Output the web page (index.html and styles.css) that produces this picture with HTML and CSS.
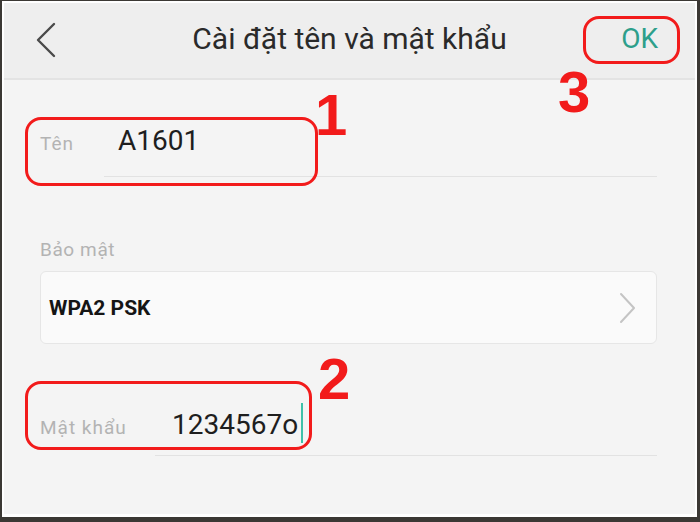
FILE: index.html
```html
<!DOCTYPE html>
<html>
<head>
    <meta charset="UTF-8">
    <title>Cài đặt tên và mật khẩu</title>
    <link rel="stylesheet" href="styles.css">
</head>
<body>
    <div class="frame">
        <div class="screen">
            <div class="header">
                <div class="header-side">
                    <svg class="back-icon" width="22" height="36" viewBox="0 0 22 36">
                        <polyline points="19,2 3,18 19,34" fill="none" stroke="#4a4a4a" stroke-width="2.4" stroke-linecap="round" stroke-linejoin="round"/>
                    </svg>
                </div>
                <div class="title">Cài đặt tên và mật khẩu</div>
                <div class="header-side header-right">
                    <span class="ok-button">OK</span>
                </div>
            </div>

            <div class="content">
                <div class="field-row name-row">
                    <div class="field-label">Tên</div>
                    <div class="field-input">A1601</div>
                </div>

                <div class="section-label">Bảo mật</div>
                <div class="select-card">
                    <span class="select-value">WPA2 PSK</span>
                    <svg class="arrow-icon" width="18" height="32" viewBox="0 0 18 32">
                        <polyline points="2,2 15,16 2,30" fill="none" stroke="#c4c4c4" stroke-width="2" stroke-linecap="round" stroke-linejoin="round"/>
                    </svg>
                </div>

                <div class="field-row password-row">
                    <div class="field-label">Mật khẩu</div>
                    <div class="field-input">1234567o<span class="cursor"></span></div>
                </div>
            </div>

            <!-- chú thích màu đỏ -->
            <div class="mark mark-ok"></div>
            <div class="mark mark-name"></div>
            <div class="mark mark-password"></div>
            <div class="step step-1">1</div>
            <div class="step step-2">2</div>
            <div class="step step-3">3</div>
        </div>
    </div>
</body>
</html>
```

FILE: styles.css
```css
:root {
    --ui-font: Roboto, "Noto Sans", "DejaVu Sans", sans-serif;
    --mark-red: #f21b1b;
}

* {
    margin: 0;
    padding: 0;
    box-sizing: border-box;
}

body {
    width: 700px;
    height: 522px;
    background: #3b3834;
    font-family: var(--ui-font);
    overflow: hidden;
}

.frame {
    width: 700px;
    height: 522px;
    border-style: solid;
    border-color: #3b3834;
    border-width: 1px 3px 5px 2px;
    padding: 2px 2px 3px 2px;
    background: #ffffff;
}

.screen {
    position: relative;
    height: 100%;
    background: #f4f4f4;
    color: #222;
}

/* thanh tiêu đề */
.header {
    display: flex;
    align-items: center;
    height: 77px;
    background: #eeeeee;
    border-bottom: 2px solid #e3e3e3;
}

.header-side {
    width: 110px;
    display: flex;
    align-items: center;
}

.back-icon {
    margin-left: 31px;
    margin-top: -2px;
}

.title {
    flex: 1;
    text-align: center;
    font-size: 30px;
    color: #2a2a2a;
    margin-top: -4px;
    white-space: nowrap;
}

.header-right {
    justify-content: flex-end;
    padding-right: 37px;
}

.ok-button {
    font-size: 28px;
    color: #2d9f8b;
    margin-top: -4px;
}

/* nội dung */
.content {
    padding: 0 38px 0 36px;
}

.field-row {
    display: flex;
    align-items: baseline;
}

.name-row {
    margin-top: 45px;
}

.password-row {
    margin-top: 59px;
}

.field-label {
    font-size: 19px;
    letter-spacing: 1px;
    color: #b3b3b3;
}

.name-row .field-label {
    width: 64px;
}

.password-row .field-label {
    width: 115px;
}

.field-input {
    flex: 1;
    font-size: 28px;
    line-height: 32px;
    color: #1e1e1e;
    border-bottom: 1px solid #e2e2e2;
}

.name-row .field-input {
    padding: 0 0 19px 14px;
}

.password-row .field-input {
    padding: 0 0 12px 17px;
}

.cursor {
    display: inline-block;
    width: 2px;
    height: 40px;
    margin-left: 3px;
    vertical-align: -9px;
    background: #3fc1a9;
}

.section-label {
    margin-top: 63px;
    font-size: 19px;
    letter-spacing: 0.6px;
    line-height: 20px;
    color: #b3b3b3;
}

.select-card {
    display: flex;
    align-items: center;
    justify-content: space-between;
    height: 73px;
    margin-top: 11px;
    padding: 0 19px 0 8px;
    background: #fafafa;
    border: 1px solid #e6e6e6;
    border-radius: 6px;
}

.select-value {
    font-size: 21px;
    font-weight: 700;
    color: #151515;
}

/* chú thích */
.mark {
    position: absolute;
    border: 3px solid var(--mark-red);
    border-radius: 16px;
}

.mark-ok {
    left: 579px;
    top: 13px;
    width: 97px;
    height: 48px;
}

.mark-name {
    left: 21px;
    top: 114px;
    width: 293px;
    height: 69px;
}

.mark-password {
    left: 21px;
    top: 378px;
    width: 287px;
    height: 69px;
}

.step {
    position: absolute;
    font-family: "Liberation Sans", Arial, sans-serif;
    font-weight: 700;
    font-size: 58px;
    line-height: 1;
    color: var(--mark-red);
}

.step-1 {
    left: 311px;
    top: 83px;
}

.step-2 {
    left: 314px;
    top: 347px;
}

.step-3 {
    left: 554px;
    top: 60px;
}
```
